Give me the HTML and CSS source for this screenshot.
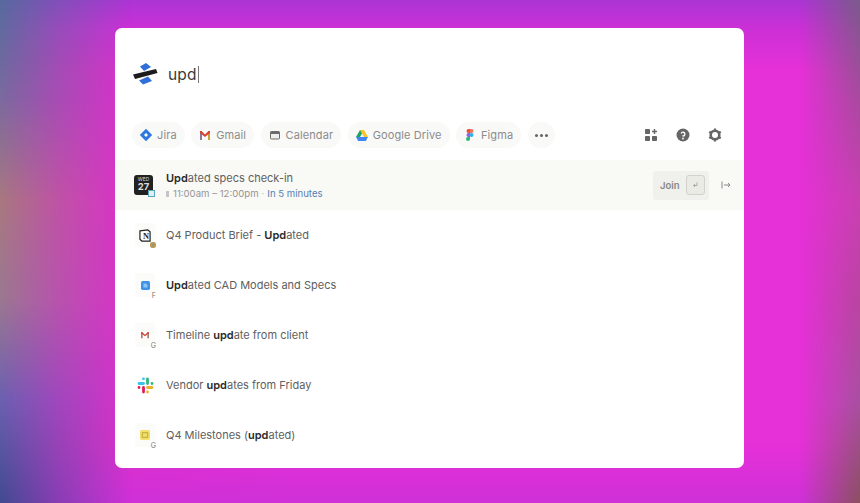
FILE: index.html
```html
<!DOCTYPE html>
<html lang="en">
<head>
<meta charset="utf-8">
<title>Search</title>
<link rel="stylesheet" href="styles.css">
</head>
<body>
<main class="card">
  <header class="search">
    <svg class="logo" width="25" height="22" viewBox="0 0 25 22"><path d="M7 3.500 13 0l5 4-7 4z" fill="#2f6fd8"/><path d="M0 11.500 23 6l1.500 4L2 16z" fill="#1c1c1c"/><path d="M6 17.500 15 13.500l4 4.500-9 3.500z" fill="#2f6fd8"/></svg>
    <span class="query">upd</span><span class="caret"></span>
  </header>
  <nav class="toolbar">
    <div class="chips">
      <span class="chip"><svg width="14" height="14" viewBox="0 0 14 14"><path d="M7 .8 13.200 7 7 13.200 .8 7z" fill="#2f78e0"/><path d="M7 5 9 7 7 9 5 7z" fill="#fff"/></svg>Jira</span>
      <span class="chip"><svg width="14" height="12" viewBox="0 0 14 12"><path d="M2 2h2v9H2z" fill="#8a7aa0"/><path d="M10 2h2v9h-2z" fill="#c9a23a"/><path d="M2 2h1.500L7 5.500 10.500 2H12v2L7 8 2 4z" fill="#d8402f"/></svg>Gmail</span>
      <span class="chip"><svg width="14" height="12" viewBox="0 0 14 12"><rect x="2.500" y="2.500" width="9" height="7.500" rx="1" fill="#eee" stroke="#6a6a6a"/><rect x="2.500" y="2.500" width="9" height="2.500" fill="#6a6a6a"/></svg>Calendar</span>
      <span class="chip"><svg width="14" height="13" viewBox="0 0 14 13"><path d="M5 1h4L5 8H1z" fill="#1fa463"/><path d="M9 1l4 7h-4L5 1z" fill="#f8c52c"/><path d="M1 8h12l-2.200 4H3.200z" fill="#4285f4"/></svg>Google Drive</span>
      <span class="chip"><svg width="14" height="14" viewBox="0 0 14 14"><path d="M7 1H5.500a2 2 0 0 0 0 4H7z" fill="#e8523a"/><path d="M7 1h1.500a2 2 0 0 1 0 4H7z" fill="#f0765e"/><path d="M7 5H5.500a2 2 0 0 0 0 4H7z" fill="#9c5ce8"/><circle cx="8.500" cy="7" r="2" fill="#27b5ea"/><path d="M5.500 9H7v2a2 2 0 1 1-1.500-2z" fill="#2dbb78"/></svg>Figma</span>
      <span class="chip more"><i></i><i></i><i></i></span>
    </div>
    <div class="tools">
      <svg width="14" height="14" viewBox="0 0 14 14" fill="#666"><rect x="1" y="1" width="5" height="5" rx=".8"/><rect x="1" y="8" width="5" height="5" rx=".8"/><rect x="8" y="8" width="5" height="5" rx=".8"/><path d="M9.800 1h1.400v1.800H13v1.400h-1.800V6H9.800V4.200H8V2.800h1.800z"/></svg>
      <svg width="14" height="14" viewBox="0 0 14 14"><circle cx="7" cy="7" r="6.500" fill="#666"/><path d="M5.200 5.500A1.900 1.900 0 1 1 7 8v.6" fill="none" stroke="#fff" stroke-width="1.300"/><circle cx="7" cy="10.500" r=".9" fill="#fff"/></svg>
      <svg width="14" height="14" viewBox="0 0 14 14"><circle cx="7" cy="7" r="4.300" fill="none" stroke="#666" stroke-width="2.600"/><g stroke="#666" stroke-width="2.200"><path d="M7 .4v2M7 11.600v2M1.300 3.700l1.700 1M11 9.300l1.700 1M1.300 10.300l1.700-1M11 4.700l1.700-1"/></g></svg>
    </div>
  </nav>
  <ul class="results">
    <li class="row active">
      <span class="icon">
        <span class="cal"><small>WED</small><b>27</b></span>
        <span class="badge zoom"></span>
      </span>
      <div class="text">
        <div class="title"><b>Upd</b>ated specs check-in</div>
        <div class="meta"><span class="tick"></span>11:00am – 12:00pm <span class="dot">·</span> <span class="soon">In 5 minutes</span></div>
      </div>
      <div class="actions">
        <span class="join">Join<kbd><svg width="9" height="10" viewBox="0 0 9 10" fill="none" stroke="#aaa" stroke-width="1"><path d="M6 2.500v3H2.500M4 4 2.500 5.500 4 7"/></svg></kbd></span>
        <svg width="10" height="10" viewBox="0 0 10 10" fill="none" stroke="#888" stroke-width="1"><path d="M1 1.500v7M3 5h6M7 3l2 2-2 2"/></svg>
      </div>
    </li>
    <li class="row">
      <span class="icon tile">
        <svg width="12" height="13" viewBox="0 0 13 14"><path d="M1 2 9.500 1 12 3v10H3L1 11z" fill="#fff" stroke="#222" stroke-width="1.300"/><text x="7.500" y="11" class="n">N</text></svg>
        <span class="badge chrome"></span>
      </span>
      <div class="title">Q4 Product Brief - <b>Upd</b>ated</div>
    </li>
    <li class="row">
      <span class="icon tile">
        <svg width="9" height="9" viewBox="0 0 11 11"><rect width="11" height="11" rx="2" fill="#3f93e6"/><path d="M3 3h3l2 2v3H3z" fill="#8cc4f3"/></svg>
        <span class="badge letter">F</span>
      </span>
      <div class="title"><b>Upd</b>ated CAD Models and Specs</div>
    </li>
    <li class="row">
      <span class="icon tile">
        <svg width="10" height="8" viewBox="0 0 14 12"><path d="M1 2h2.500v9H1z" fill="#a08078"/><path d="M10.500 2H13v9h-2.500z" fill="#a08078"/><path d="M1 2h2L7 5.500 11 2h2v1.500L7 8 1 3.500z" fill="#d8402f"/></svg>
        <span class="badge letter">G</span>
      </span>
      <div class="title">Timeline <b>upd</b>ate from client</div>
    </li>
    <li class="row">
      <span class="icon">
        <svg width="17" height="17" viewBox="0 0 17 17" fill="none" stroke-width="2.800" stroke-linecap="round"><path d="M6.500 1.800v0M6.500 6.500H2" stroke="#36c5f0"/><path d="M10.500 2v4.500M15 6.500h0" stroke="#2eb67d"/><path d="M10.500 15v0M10.500 10.500H15" stroke="#ecb22e"/><path d="M6.500 15v-4.500M2 10.500h0" stroke="#e01e5a"/></svg>
      </span>
      <div class="title">Vendor <b>upd</b>ates from Friday</div>
    </li>
    <li class="row">
      <span class="icon tile">
        <svg width="10" height="10" viewBox="0 0 11 11"><rect width="11" height="11" rx="2" fill="#f3e06a"/><rect x="2.500" y="3" width="6" height="5" fill="none" stroke="#b5a540"/></svg>
        <span class="badge letter">G</span>
      </span>
      <div class="title">Q4 Milestones (<b>upd</b>ated)</div>
    </li>
  </ul>
</main>
</body>
</html>
```
FILE: styles.css
```css
* { box-sizing: border-box; }
html, body { height: 100%; }
body {
  position: relative;
  margin: 0;
  overflow: hidden;
  padding: 28px 116px 35px 115px;
  font-family: Inter, "Liberation Sans", sans-serif;
  background-color: #e630d8;
  background-image:
    linear-gradient(180deg, #ab35d4 0, #cb30d6 28px, rgba(230, 48, 216, 0) 70px),
    linear-gradient(0deg, #cf30d8 0, rgba(230, 48, 216, 0) 60px),
    linear-gradient(90deg, #cf2fc8 0, #dc2fcc 120px, #e630d8 300px);
}
body::before,
body::after {
  content: "";
  position: absolute;
  top: 0;
  bottom: 0;
}
body::before {
  left: 0;
  width: 130px;
  background: linear-gradient(180deg, #566a9e 0, #7a6a9e 100px, #a8787f 200px, #9a7890 300px, #6a60b0 400px, #404a90 100%);
  -webkit-mask-image: linear-gradient(90deg, #000 0, rgba(0, 0, 0, .5) 57px, rgba(0, 0, 0, 0) 100%);
  mask-image: linear-gradient(90deg, #000 0, rgba(0, 0, 0, .5) 57px, rgba(0, 0, 0, 0) 100%);
}
body::after {
  right: 0;
  width: 60px;
  background: linear-gradient(180deg, #7a5a8a 0, #a84a9e 100px, #c840b0 200px, #b845a0 300px, #a850a0 400px, #8a5060 100%);
  -webkit-mask-image: linear-gradient(270deg, #000 0, rgba(0, 0, 0, 0) 100%);
  mask-image: linear-gradient(270deg, #000 0, rgba(0, 0, 0, 0) 100%);
}
.card {
  position: relative;
  z-index: 1;
  height: 440px;
  background: #fff;
  border-radius: 7px;
  display: flex;
  flex-direction: column;
  overflow: hidden;
}
.search {
  height: 92px;
  padding: 0 0 0 18px;
  display: flex;
  align-items: center;
  flex: none;
}
.logo { margin-right: 10px; }
.query {
  font-size: 15.5px;
  letter-spacing: .2px;
  color: #3a3a3a;
}
.caret {
  width: 1px;
  height: 17px;
  margin-left: 1px;
  background: #777;
}
.toolbar {
  height: 30px;
  padding: 0 22px 0 17px;
  flex: none;
  display: flex;
  align-items: center;
  justify-content: space-between;
}
.chips { display: flex; gap: 6.500px; }
.chip {
  height: 26px;
  padding: 0 8px 0 7px;
  border-radius: 13px;
  background: #f9f9f7;
  display: flex;
  align-items: center;
  gap: 4px;
  font-size: 11px;
  color: #8c8c8c;
  letter-spacing: .1px;
}
.more { gap: 2px; padding: 0 7px; }
.more i {
  width: 3px;
  height: 3px;
  border-radius: 50%;
  background: #666;
}
.tools { display: flex; gap: 18px; }
.results {
  list-style: none;
  margin: 10px 0 0;
  padding: 0;
}
.row {
  height: 50px;
  padding: 0 13px 0 20px;
  display: flex;
  align-items: center;
  gap: 11px;
  font-size: 11px;
  color: #606060;
}
.active { background: #f9f9f6; }
.icon {
  position: relative;
  width: 20px;
  height: 24px;
  flex: none;
  display: flex;
  align-items: center;
  justify-content: center;
}
.tile { background: #fbfbf9; border-radius: 3px; }
.cal {
  width: 19px;
  height: 20px;
  margin-left: -3px;
  border-radius: 3px;
  background: #222;
  color: #ddd;
  display: flex;
  flex-direction: column;
  align-items: center;
  line-height: 1;
}
.cal small { font-size: 5px; margin-top: 2px; }
.cal b { font-size: 9.500px; font-weight: 700; }
.badge {
  position: absolute;
  right: -1px;
  bottom: -2px;
}
.zoom {
  width: 7px;
  height: 7px;
  background: #dfeff4;
  border: 1.500px solid #5ba8bc;
  bottom: 0;
  right: 0;
}
.chrome {
  width: 6px;
  height: 6px;
  border-radius: 50%;
  background: #8a9a70;
  box-shadow: inset 0 0 0 1.500px #c99a5a;
  bottom: -1px;
}
.letter {
  font-size: 7px;
  color: #777;
  background: #fff;
  line-height: 1;
}
.title b { font-weight: 600; color: #2a2a2a; }
.text { flex: 1; }
.active .title { margin-bottom: 3px; }
.meta {
  font-size: 9.600px;
  color: #959595;
  display: flex;
  align-items: center;
  gap: 3px;
}
.tick { width: 3px; height: 6px; background: #c4c4c4; margin-right: 1px; }
.dot { color: #c4c4c4; }
.soon { color: #5580b0; }
.n { font: 700 9px "Liberation Serif", serif; fill: #222; text-anchor: middle; }
.actions { display: flex; align-items: center; gap: 12px; }
.join {
  width: 56px;
  height: 29px;
  background: #f0f0ec;
  border-radius: 3px;
  padding-left: 7px;
  display: flex;
  align-items: center;
  gap: 6px;
  font-size: 9.500px;
  font-weight: 600;
  color: #888;
}
kbd {
  width: 19px;
  height: 20px;
  border: 1px solid #d2d2cc;
  border-radius: 3px;
  background: #ebebe6;
  display: flex;
  align-items: center;
  justify-content: center;
}
```
